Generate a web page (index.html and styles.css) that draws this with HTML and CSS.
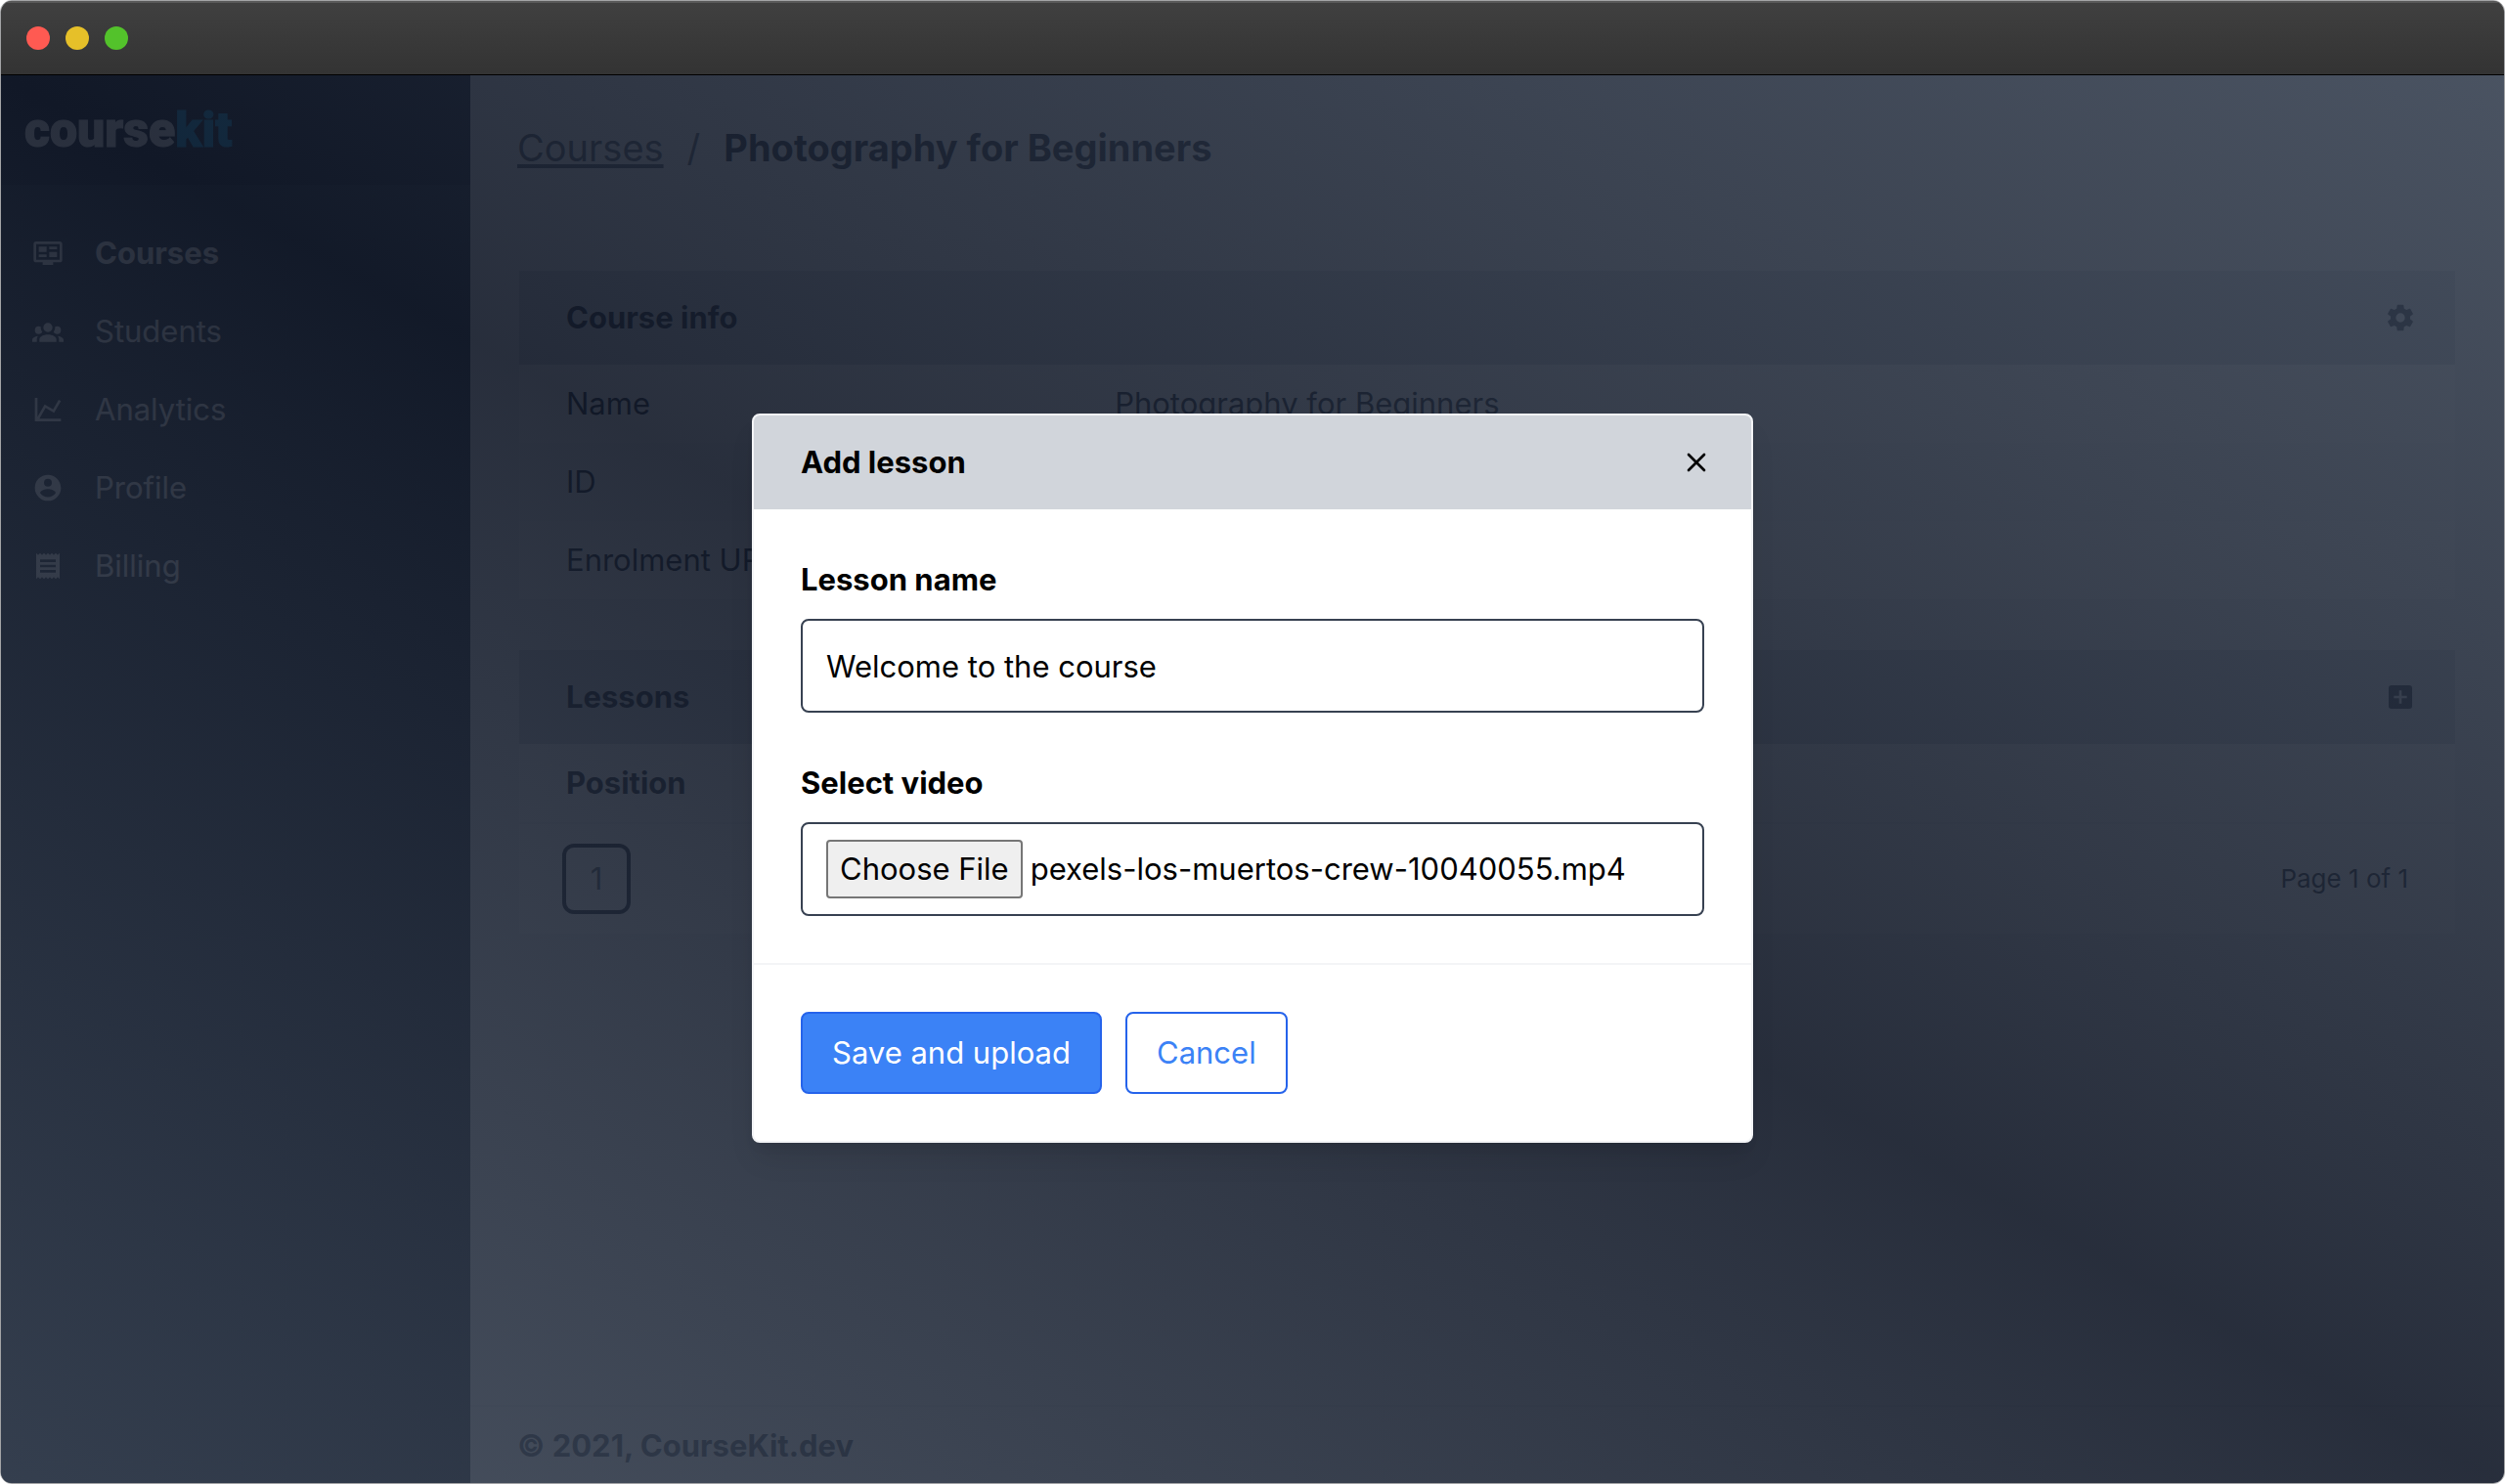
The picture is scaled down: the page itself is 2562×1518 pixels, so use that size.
FILE: index.html
```html
<!DOCTYPE html>
<html lang="en">
<head>
  <meta charset="utf-8">
  <title>Photography for Beginners - CourseKit</title>
  <link rel="stylesheet" href="styles.css">
</head>
<body>
  <div class="window">
    <div class="titlebar">
      <span class="light light-red"></span>
      <span class="light light-yellow"></span>
      <span class="light light-green"></span>
    </div>

    <div class="app">
      <aside class="sidebar">
        <div class="brand"><a class="logo" href="#">course<span class="logo-kit">kit</span></a></div>
        <nav class="nav">
          <a class="nav-link nav-link-active" href="#">
            <svg class="icon" viewBox="0 0 24 24"><path d="M21,17V5H3V17H21M21,3A2,2 0 0,1 23,5V17A2,2 0 0,1 21,19H16V21H8V19H3A2,2 0 0,1 1,17V5A2,2 0 0,1 3,3H21M5,7H11V11H5V7M5,13H11V15H5V13M13,7H19V9H13V7M13,11H19V15H13V11Z"/></svg>
            Courses
          </a>
          <a class="nav-link" href="#">
            <svg class="icon" viewBox="0 0 24 24"><path d="M12,5.5A3.5,3.5 0 0,1 15.5,9A3.5,3.5 0 0,1 12,12.5A3.5,3.5 0 0,1 8.5,9A3.5,3.5 0 0,1 12,5.5M5,8C5.56,8 6.08,8.15 6.53,8.42C6.38,9.85 6.8,11.27 7.66,12.38C7.16,13.34 6.16,14 5,14A3,3 0 0,1 2,11A3,3 0 0,1 5,8M19,8A3,3 0 0,1 22,11A3,3 0 0,1 19,14C17.84,14 16.84,13.34 16.34,12.38C17.2,11.27 17.62,9.85 17.47,8.42C17.92,8.15 18.44,8 19,8M5.5,18.25C5.5,16.18 8.41,14.5 12,14.5C15.59,14.5 18.5,16.18 18.5,18.25V20H5.5V18.25M0,20V18.5C0,17.11 1.89,15.94 4.45,15.6C3.86,16.28 3.5,17.22 3.5,18.25V20H0M24,20H20.5V18.25C20.5,17.22 20.14,16.28 19.55,15.6C22.11,15.94 24,17.11 24,18.5V20Z"/></svg>
            Students
          </a>
          <a class="nav-link" href="#">
            <svg class="icon" viewBox="0 0 24 24"><path d="M16,11.78L20.24,4.45L21.97,5.45L16.74,14.5L10.23,10.75L5.46,19H22V21H2V3H4V17.54L9.5,8L16,11.78Z"/></svg>
            Analytics
          </a>
          <a class="nav-link" href="#">
            <svg class="icon" viewBox="0 0 24 24"><path d="M12,19.2C9.5,19.2 7.29,17.92 6,16C6.03,14 10,12.9 12,12.9C14,12.9 17.97,14 18,16C16.71,17.92 14.5,19.2 12,19.2M12,5A3,3 0 0,1 15,8A3,3 0 0,1 12,11A3,3 0 0,1 9,8A3,3 0 0,1 12,5M12,2A10,10 0 0,0 2,12A10,10 0 0,0 12,22A10,10 0 0,0 22,12C22,6.47 17.5,2 12,2Z"/></svg>
            Profile
          </a>
          <a class="nav-link" href="#">
            <svg class="icon" viewBox="0 0 24 24"><path d="M3,22L4.5,20.5L6,22L7.5,20.5L9,22L10.5,20.5L12,22L13.5,20.5L15,22L16.5,20.5L18,22L19.5,20.5L21,22V2L19.5,3.5L18,2L16.5,3.5L15,2L13.5,3.5L12,2L10.5,3.5L9,2L7.5,3.5L6,2L4.5,3.5L3,2M18,9H6V7H18M18,13H6V11H18M18,17H6V15H18V17Z"/></svg>
            Billing
          </a>
        </nav>
      </aside>

      <div class="page">
        <header class="page-header">
          <a class="crumb-link" href="#">Courses</a>
          <span class="crumb-sep">/</span>
          <h1 class="crumb-title">Photography for Beginners</h1>
        </header>

        <main class="content">
          <section class="card">
            <div class="card-header">
              <h2 class="card-title">Course info</h2>
              <button class="icon-button" type="button" aria-label="Course settings">
                <svg class="icon" viewBox="0 0 24 24"><path d="M12,15.5A3.5,3.5 0 0,1 8.5,12A3.5,3.5 0 0,1 12,8.5A3.5,3.5 0 0,1 15.5,12A3.5,3.5 0 0,1 12,15.5M19.43,12.97C19.47,12.65 19.5,12.33 19.5,12C19.5,11.67 19.47,11.34 19.43,11L21.54,9.37C21.73,9.22 21.78,8.95 21.66,8.73L19.66,5.27C19.54,5.05 19.27,4.96 19.05,5.05L16.56,6.05C16.04,5.66 15.5,5.32 14.87,5.07L14.5,2.42C14.46,2.18 14.25,2 14,2H10C9.75,2 9.54,2.18 9.5,2.42L9.13,5.07C8.5,5.32 7.96,5.66 7.44,6.05L4.95,5.05C4.73,4.96 4.46,5.05 4.34,5.27L2.34,8.73C2.21,8.95 2.27,9.22 2.46,9.37L4.57,11C4.53,11.34 4.5,11.67 4.5,12C4.5,12.33 4.53,12.65 4.57,12.97L2.46,14.63C2.27,14.78 2.21,15.05 2.34,15.27L4.34,18.73C4.46,18.95 4.73,19.03 4.95,18.95L7.44,17.94C7.96,18.34 8.5,18.68 9.13,18.93L9.5,21.58C9.54,21.82 9.75,22 10,22H14C14.25,22 14.46,21.82 14.5,21.58L14.87,18.93C15.5,18.67 16.04,18.34 16.56,17.94L19.05,18.95C19.27,19.03 19.54,18.95 19.66,18.73L21.66,15.27C21.78,15.05 21.73,14.78 21.54,14.63L19.43,12.97Z"/></svg>
              </button>
            </div>
            <dl class="details">
              <div class="detail-row"><dt>Name</dt><dd>Photography for Beginners</dd></div>
              <div class="detail-row"><dt>ID</dt><dd></dd></div>
              <div class="detail-row"><dt>Enrolment URL</dt><dd></dd></div>
            </dl>
          </section>

          <section class="card">
            <div class="card-header">
              <h2 class="card-title">Lessons</h2>
              <button class="icon-button" type="button" aria-label="Add lesson">
                <svg class="icon" viewBox="0 0 24 24"><path d="M17,13H13V17H11V13H7V11H11V7H13V11H17M19,3H5C3.89,3 3,3.89 3,5V19A2,2 0 0,0 5,21H19A2,2 0 0,0 21,19V5C21,3.89 20.1,3 19,3Z"/></svg>
              </button>
            </div>
            <table class="lessons">
              <thead><tr><th scope="col">Position</th></tr></thead>
            </table>
            <div class="pagination">
              <button class="page-number" type="button">1</button>
              <span class="page-count">Page 1 of 1</span>
            </div>
          </section>
        </main>

        <footer class="footer">© 2021, CourseKit.dev</footer>
      </div>

      <div class="backdrop"></div>
      <div class="modal-layer">
        <form class="modal" role="dialog" aria-labelledby="modal-title">
          <div class="modal-header">
            <h2 class="modal-title" id="modal-title">Add lesson</h2>
            <button class="icon-button modal-close" type="button" aria-label="Close">
              <svg class="icon icon-line" viewBox="0 0 24 24"><path d="M6 6L18 18M18 6L6 18"/></svg>
            </button>
          </div>
          <div class="modal-body">
            <div class="field">
              <label class="label" for="lesson-name">Lesson name</label>
              <input class="input" id="lesson-name" type="text" value="Welcome to the course">
            </div>
            <div class="field">
              <label class="label" for="lesson-video">Select video</label>
              <input class="input input-file" id="lesson-video" type="file" accept="video/*">
            </div>
          </div>
          <div class="modal-footer">
            <button class="button button-primary" type="submit">Save and upload</button>
            <button class="button" type="button">Cancel</button>
          </div>
        </form>
      </div>
    </div>
  </div>
  <script src="main.js"></script>
</body>
</html>
```
FILE: styles.css
```css
* {
  box-sizing: border-box;
}

body {
  margin: 0;
  background: #fff;
  color: #111827;
  font: 31px/48px Inter, "Liberation Sans", sans-serif;
}

h1, h2, dl, dd {
  margin: 0;
}

button, input {
  font: inherit;
}

a {
  color: inherit;
  text-decoration: none;
}

/* Window frame */
.window {
  display: flex;
  flex-direction: column;
  min-height: 100vh;
  border: 1px solid #a3a4a6;
  border-radius: 12px;
  overflow: hidden;
}

.titlebar {
  display: flex;
  align-items: center;
  gap: 16px;
  height: 76px;
  padding: 0 26px;
  border-bottom: 1px solid #000;
  background: linear-gradient(#404040, #333);
  box-shadow: inset 0 2px 0 #595959;
}

.light {
  width: 24px;
  height: 24px;
  border-radius: 50%;
}

.light-red { background: #ff5a52; }
.light-yellow { background: #e6c029; }
.light-green { background: #53c22b; }

.app {
  position: relative;
  display: flex;
  flex: 1;
}

/* Sidebar */
.sidebar {
  flex: 0 0 480px;
  background: #1f2937;
  color: #fff;
}

.brand {
  display: flex;
  align-items: center;
  height: 112px;
  padding: 0 24px;
  background: #111827;
}

.logo {
  font: 900 50px/48px Roboto, "Liberation Sans", sans-serif;
  -webkit-text-stroke: 1px currentColor;
}

.logo-kit {
  color: #0ea5e9;
}

.nav {
  display: flex;
  flex-direction: column;
  padding: 30px 32px;
}

.nav-link {
  display: flex;
  align-items: center;
  gap: 32px;
  padding: 16px 0;
}

.nav-link-active {
  font-weight: 700;
}

.icon {
  display: block;
  width: 32px;
  height: 32px;
  fill: currentColor;
}

.icon-line {
  fill: none;
  stroke: currentColor;
  stroke-width: 2;
  stroke-linecap: round;
}

/* Page */
.page {
  display: flex;
  flex: 1;
  flex-direction: column;
  min-width: 0;
  background: #f3f4f6;
}

.page-header {
  display: flex;
  gap: 24px;
  padding: 48px;
  border-bottom: 2px solid #f3f4f6;
  font-size: 38px;
  line-height: 52px;
}

.crumb-link,
.crumb-sep {
  color: #4b5563;
}

.crumb-link {
  text-decoration: underline;
  text-decoration-thickness: 4px;
  text-underline-offset: 3px;
}

.crumb-title {
  font-size: 38px;
  font-weight: 700;
}

.content {
  display: flex;
  flex: 1;
  flex-direction: column;
  gap: 48px;
  padding: 48px;
}

.card {
  border: 2px solid #f3f4f6;
  background: #fff;
}

.card-header,
.modal-header {
  display: flex;
  align-items: center;
  justify-content: space-between;
  height: 96px;
  padding: 0 40px 0 48px;
  background: #d1d5db;
}

.card-title,
.modal-title {
  font-size: 31px;
  font-weight: 700;
}

.icon-button {
  padding: 0;
  border: 0;
  background: none;
  color: #111827;
}

.detail-row {
  display: grid;
  grid-template-columns: 2fr 5fr;
  gap: 32px;
  padding: 16px 48px;
}

.detail-row:nth-child(even) {
  background: #f9fafb;
}

.lessons {
  width: 100%;
  border-collapse: collapse;
}

.lessons th {
  padding: 16px 48px;
  border-bottom: 2px solid #f3f4f6;
  text-align: left;
}

.pagination {
  display: flex;
  align-items: center;
  justify-content: space-between;
  padding: 24px 48px;
}

.page-number {
  width: 62px;
  height: 64px;
  padding: 0;
  border: 0;
  border-radius: 8px;
  background: none;
  box-shadow: 0 0 0 4px #111827;
  color: #4b5563;
}

.page-count {
  font-size: 26px;
}

.footer {
  padding: 16px 48px 14px;
  border-top: 2px solid #e5e7eb;
  color: #374151;
  font-weight: 700;
}

/* Modal */
.backdrop {
  position: absolute;
  inset: 0;
  background: linear-gradient(to top right, #374151, #111827, #374151);
  opacity: 0.9;
}

.modal-layer {
  position: absolute;
  inset: 0;
  display: flex;
  align-items: center;
  justify-content: center;
  padding-bottom: 2px;
}

.modal {
  width: 40%;
  min-width: 800px;
  border: 2px solid #f3f4f6;
  border-radius: 8px;
  background: #fff;
  box-shadow: 0 20px 30px -6px rgba(0, 0, 0, 0.1), 0 8px 12px -4px rgba(0, 0, 0, 0.05);
  color: #000;
}

.modal-header {
  border-radius: 6px 6px 0 0;
}

.modal-close {
  color: #000;
}

.modal-body {
  display: flex;
  flex-direction: column;
  gap: 48px;
  padding: 48px;
}

.field {
  display: flex;
  flex-direction: column;
  gap: 16px;
}

.label {
  font-weight: 700;
}

.input {
  width: 100%;
  height: 96px;
  padding: 0 24px;
  border: 2px solid #374151;
  border-radius: 8px;
  background: #fff;
  color: #000;
}

.input-file {
  padding: 16px 24px;
}

.input-file::file-selector-button {
  height: 60px;
  margin: 0 8px 0 0;
  padding: 0 12px;
  border: 2px solid #767676;
  border-radius: 4px;
  background: #efefef;
  color: #000;
  font: inherit;
}

.modal-footer {
  display: flex;
  gap: 24px;
  padding: 48px;
  border-top: 2px solid #f3f4f6;
}

.button {
  padding: 16px 30px;
  border: 2px solid #2563eb;
  border-radius: 8px;
  background: #fff;
  color: #3b82f6;
}

.button-primary {
  background: #3b82f6;
  color: #fff;
}
```
FILE: main.js
```js
const picked = new DataTransfer();
picked.items.add(new File([''], 'pexels-los-muertos-crew-10040055.mp4', { type: 'video/mp4' }));
document.getElementById('lesson-video').files = picked.files;
```
